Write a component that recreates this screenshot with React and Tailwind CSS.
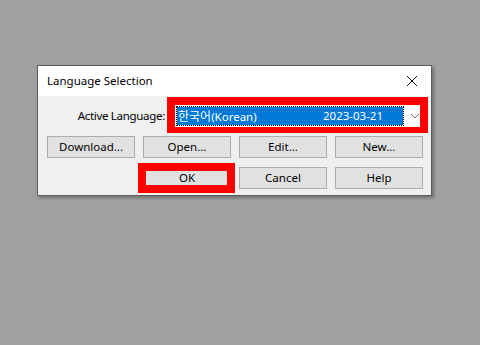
import React from "react";

function Btn({ children, className = "" }) {
  return (
    <button
      className={`w-[88px] h-[22px] bg-[#e1e1e1] border border-[#adadad] text-[11.5px] text-black leading-none flex items-center justify-center ${className}`}
    >
      {children}
    </button>
  );
}

export default function App() {
  return (
    <div className="w-[480px] h-[345px] bg-[#a0a0a0] pt-[65px] pl-[37px] font-['Noto_Sans','Noto_Sans_CJK_KR',sans-serif] overflow-hidden">
      <div className="w-[395px] h-[131px] border border-[#5c5c5c] bg-[#f0f0f0] shadow-[2px_2px_3px_rgba(0,0,0,0.3)] flex flex-col">
        {/* title bar */}
        <div className="h-[30px] bg-white flex items-center justify-between pl-[9px] pr-[10px]">
          <span className="text-[11.5px] text-black">Language Selection</span>
          <svg width="12" height="12" viewBox="0 0 12 12" className="mr-[3px]">
            <path d="M1 1 L11 11 M11 1 L1 11" stroke="#111" strokeWidth="1" />
          </svg>
        </div>

        {/* body */}
        <div className="flex flex-col pt-[1px]">
          <div className="flex items-center justify-end pr-[3px]">
            <span className="text-[11.5px] text-black mr-[2px] mt-[1px] tracking-[-0.3px]">Active Language:</span>
            <div className="w-[261px] h-[36px] border-x-8 border-t-8 border-b-[6px] border-[#ff0000]">
              <div className="h-full bg-white flex items-center pl-[1px]">
                <div className="w-[229px] h-[20px] bg-[#0078d7] bg-clip-padding border border-dotted border-black flex items-center text-white text-[11.5px] leading-none">
                  <span className="w-[146px] pl-[1px]">
                    <span className="font-['Noto_Sans_CJK_KR',sans-serif] text-[12px]">한국어</span>(Korean)
                  </span>
                  <span>2023-03-21</span>
                </div>
                <svg width="10" height="6" viewBox="0 0 10 6" className="ml-[6px]">
                  <path d="M1 1 L5 5 L9 1" stroke="#666" strokeWidth="1" fill="none" />
                </svg>
              </div>
            </div>
          </div>

          <div className="flex gap-2 pl-[9px] mt-[3px]">
            <Btn>Download...</Btn>
            <Btn>Open...</Btn>
            <Btn>Edit...</Btn>
            <Btn>New...</Btn>
          </div>

          <div className="flex gap-2 pl-[105px] mt-[9px]">
            <div className="relative">
              <Btn>OK</Btn>
              <div className="absolute left-[-5px] top-[-4px] w-[97px] h-[30px] border-8 border-[#ff0000] pointer-events-none" />
            </div>
            <Btn>Cancel</Btn>
            <Btn>Help</Btn>
          </div>
        </div>
      </div>
    </div>
  );
}
